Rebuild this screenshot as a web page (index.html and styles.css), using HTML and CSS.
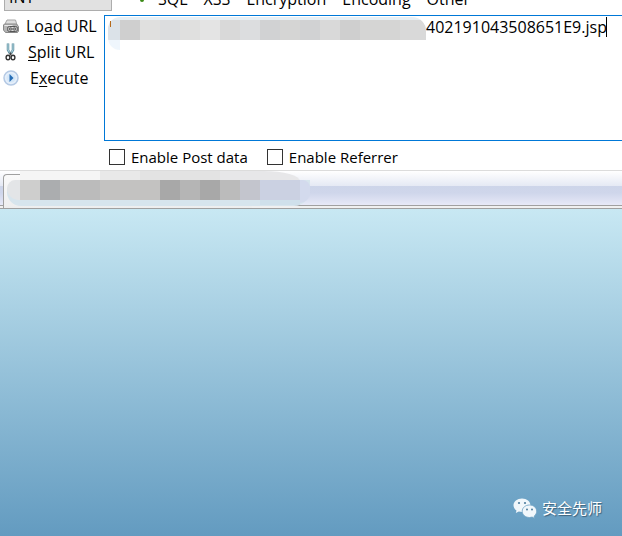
FILE: index.html
```html
<!DOCTYPE html>
<html lang="en">
<head>
<meta charset="utf-8">
<title>HackBar</title>
<link rel="stylesheet" href="styles.css">
</head>
<body>
<header class="menubar">
  <select class="type" aria-label="Type"><option>INT</option></select>
  <span class="dot"></span>
  <nav class="menus">
    <button type="button">SQL</button>
    <button type="button">XSS</button>
    <button type="button">Encryption</button>
    <button type="button">Encoding</button>
    <button type="button">Other</button>
  </nav>
</header>
<main class="hackbar">
  <div class="actions">
    <button type="button" class="load">
      <svg width="16" height="16" viewBox="0 0 16 16"><path d="M4 2h8.500l1.500 5H1.500z" fill="#dedede" stroke="#a5a5a5"/><path d="M1.500 6h12l2 2.500V13l-1 1.500H2.500L.5 12V7z" fill="#b5b5b5" stroke="#888"/><path d="M1.500 7.500h8" stroke="#e8e8e8"/><rect x="4.500" y="8.500" width="10" height="5" rx="2" fill="#ddd" stroke="#555"/><path d="M8.500 10H7a1 1 0 0 0 0 2h1.500M10.500 10H12a1 1 0 0 1 0 2h-1.500M8 11h3" fill="none" stroke="#444"/></svg>
      <span>Lo<u>a</u>d URL</span>
    </button>
    <button type="button" class="split">
      <svg width="16" height="18" viewBox="0 0 16 18"><path d="M6 .5v6.500l2 3.500M11 .5v6.500l-2 3.500" fill="none" stroke="#5d8fa1" stroke-width="2.500"/><path d="M6 1v6l2 3M11 1v6l-2 3" fill="none" stroke="#b9d9e2"/><path d="M8.500 9.500v3" stroke="#444" stroke-width="2"/><ellipse cx="6" cy="14.500" rx="1.900" ry="2.300" fill="#fff" stroke="#333" stroke-width="1.400"/><ellipse cx="11" cy="14.500" rx="1.900" ry="2.300" fill="#fff" stroke="#333" stroke-width="1.400"/></svg>
      <span><u>S</u>plit URL</span>
    </button>
    <button type="button" class="execute">
      <svg width="16" height="16" viewBox="0 0 16 16"><circle cx="8" cy="8" r="7" fill="#e5effa" stroke="#b4c9e4" stroke-width="1.500"/><circle cx="8" cy="8" r="4.500" fill="#d5e7f8"/><path d="M6.500 4l4 4-4 4z" fill="#266db5"/></svg>
      <span>E<u>x</u>ecute</span>
    </button>
  </div>
  <div class="fields">
    <div class="urlbox">
      <textarea aria-label="URL" spellcheck="false">402191043508651E9.jsp</textarea>
      <div class="mosaic url-mosaic"><i class="edge"></i><i class="c1"></i><i class="c2"></i><i class="c3"></i><i class="c2"></i><i class="c4"></i><i class="c5"></i><i class="c3"></i><i class="c6"></i><i class="c7"></i><i class="c6"></i><i class="c5"></i><i class="c1"></i><i class="c7"></i><i class="c7"></i><i class="c5 last"></i></div>
      <span class="tick"></span>
      <span class="caret"></span>
    </div>
    <div class="options">
      <label><input type="checkbox">Enable Post data</label>
      <label><input type="checkbox">Enable Referrer</label>
    </div>
  </div>
</main>
<div class="tabs">
  <div class="tab"></div>
  <div class="corner"></div>
  <div class="haze"></div>
  <div class="mosaic tab-mosaic"><i class="d0"></i><i class="d1"></i><i class="d2"></i><i class="d3"></i><i class="d3"></i><i class="d4"></i><i class="d4"></i><i class="d4"></i><i class="d5"></i><i class="d6"></i><i class="d5"></i><i class="d3"></i><i class="d7"></i><i class="d8"></i><i class="d8"></i><i class="d9"></i></div>
</div>
<section class="page">
  <div class="mark">
    <svg width="24" height="21" viewBox="0 0 24 21"><path d="M9 .5C4.200.5.500 3.500.500 7.300c0 2.200 1.200 4 3 5.300L2.800 15l3-1.500 3.200.5c4.800 0 8.500-3 8.500-6.700S13.800.500 9 .500z" fill="#f1f7fb"/><path d="M16.500 7c-4 0-7.300 2.700-7.300 6.200s3.300 6.300 7.300 6.300l2.700-.4 2.600 1.400-.7-2.300c1.600-1.200 2.600-3 2.600-5 0-3.500-3.200-6.200-7.200-6.200z" fill="#f1f7fb" stroke="#6b9fc1" stroke-width=".8"/><g fill="#507f9f"><circle cx="6" cy="5" r="1.100"/><circle cx="12" cy="5" r="1.100"/><circle cx="14" cy="11.500" r="1"/><circle cx="19" cy="11.500" r="1"/></g></svg>
    <span lang="zh">安全先师</span>
  </div>
</section>
</body>
</html>
```

FILE: styles.css
```css
* { box-sizing: border-box; }
body {
  margin: 0;
  height: 100vh;
  display: flex;
  flex-direction: column;
  overflow: hidden;
  background: #fff;
  color: #000;
  font: 16px/20px "Open Sans", "Noto Sans", sans-serif;
}
button {
  padding: 0;
  border: 0;
  background: none;
  color: inherit;
  font: inherit;
  white-space: nowrap;
}
u { text-underline-offset: 2px; text-decoration-thickness: 1px; }

.menubar {
  height: 11px;
  display: flex;
  align-items: flex-end;
  overflow: hidden;
}
.type {
  width: 108px;
  height: 28px;
  margin-left: 4px;
  padding: 0 4px;
  flex: none;
  appearance: none;
  border: 1px solid #adadad;
  border-radius: 0;
  background: #e1e1e1;
  color: #000;
  font: inherit;
}
.dot {
  width: 4px;
  height: 4px;
  margin: 0 14px 9px 28px;
  border-radius: 2px;
  background: #3a8a16;
}
.menus { display: flex; gap: 16px; margin-bottom: 2px; }

.hackbar { display: flex; margin-top: 4px; }
.actions {
  width: 104px;
  flex: none;
  display: flex;
  flex-direction: column;
  gap: 6px;
  padding-top: 1px;
}
.actions button { display: flex; align-items: center; height: 20px; padding-left: 3px; gap: 7px; }
.actions .split { padding-left: 2px; gap: 10px; }
.actions .execute { gap: 11px; }
.fields { flex: 1; min-width: 0; }
.urlbox { position: relative; height: 126px; }
textarea {
  display: block;
  width: 100%;
  height: 100%;
  padding: 1px 0 0 321px;
  border: 1px solid #0078d7;
  border-right: 0;
  border-radius: 0;
  outline: 0;
  resize: none;
  overflow: hidden;
  background: #fff;
  color: #000;
  font: inherit;
}
.tick { position: absolute; left: 6px; top: 6px; width: 1px; height: 6px; background: #b56a1c; }
.caret { position: absolute; left: 502px; top: 2px; width: 1px; height: 20px; background: #000; }

.mosaic { position: absolute; display: flex; }
.mosaic i { width: 20px; height: 20px; }
.url-mosaic {
  left: 4px;
  top: 2px;
  padding-top: 3px;
  border-radius: 12px 14px 0 0;
  overflow: hidden;
  background: linear-gradient(#e7eff4 0 3px, transparent 3px);
}
.url-mosaic .edge { width: 12px; height: 30px; background: linear-gradient(#dbe2e8 0 20px, #eff6fd 20px); border-radius: 0 0 0 12px; }
.url-mosaic .last { width: 26px; }
.c1 { background: #cfcfcf; }
.c2 { background: #e0e0df; }
.c3 { background: #dcdddf; }
.c4 { background: #e4e4e4; }
.c5 { background: #d9d9d9; }
.c6 { background: #d1d2d3; }
.c7 { background: #d5d5d4; }

.options { display: flex; gap: 19px; padding: 6px 0 3px 5px; font-size: 15px; }
.options label { display: flex; align-items: center; gap: 6px; white-space: nowrap; }
.options input {
  width: 16px;
  height: 16px;
  margin: 0;
  appearance: none;
  border: 1px solid #333;
  background: #fff;
}

.tabs {
  position: relative;
  height: 39px;
  flex: none;
  display: flex;
  border-top: 1px solid #dcdcdc;
  border-bottom: 1px solid #a0a0a0;
  background: linear-gradient(#fff, #e5e9f4 15px, #cdd5e9 15px, #cfd6eb 22px, #e7e9f7 34px, #a0a0a0 34px 35px, #f0f0f0 35px);
}
.tab {
  width: 249px;
  margin: 3px 0 0 3px;
  border: 1px solid #a0a0a0;
  border-width: 1px 0 0 1px;
  border-radius: 4px 0 0 0;
  background: linear-gradient(#fafafa, #eee);
}
.corner { width: 1px; height: 3px; margin-top: 32px; background: #a0a0a0; }
.haze {
  position: absolute;
  left: 20px;
  top: 0;
  width: 280px;
  height: 12px;
  border-radius: 0 36px 0 0 / 0 10px 0 0;
  background: linear-gradient(90deg, #f5f5f5 0 80px, #e9e9e9 80px 120px, #e3e3e3 120px 200px, #e7e7e9 200px);
}
.tab-mosaic {
  left: 7px;
  top: 9px;
  padding-bottom: 3px;
  border-radius: 12px 0 16px 14px;
  background: #d7e5ed;
}
.tab-mosaic .d0 { width: 13px; background: #e3e5e7; border-radius: 10px 0 0 14px; }
.tab-mosaic .d8 { border-bottom: 0; box-shadow: 0 5px #cfe0eb; }
.tab-mosaic .d9 { width: 10px; height: 23px; border-radius: 0 12px 16px 0; }
.d1 { background: #cececd; }
.d2 { background: #abadaf; }
.d3 { background: #bbbbbb; }
.d4 { background: #c3c2c1; }
.d5 { background: #a8a8a8; }
.d6 { background: #b5b5b5; }
.d7 { background: #c3c5cd; }
.d8 { background: #cbd1e2; }
.d9 { background: #d3daed; }

.page {
  flex: 1;
  display: flex;
  align-items: flex-end;
  justify-content: flex-end;
  padding: 0 20px 17px;
  background: linear-gradient(#c8e8f3, #639bc0);
}
.mark {
  display: flex;
  align-items: center;
  gap: 5px;
  color: #fff;
  font: 15px/22px "Noto Sans CJK SC", sans-serif;
  text-shadow: 1px 1px 1px #3c5f78;
}
```
